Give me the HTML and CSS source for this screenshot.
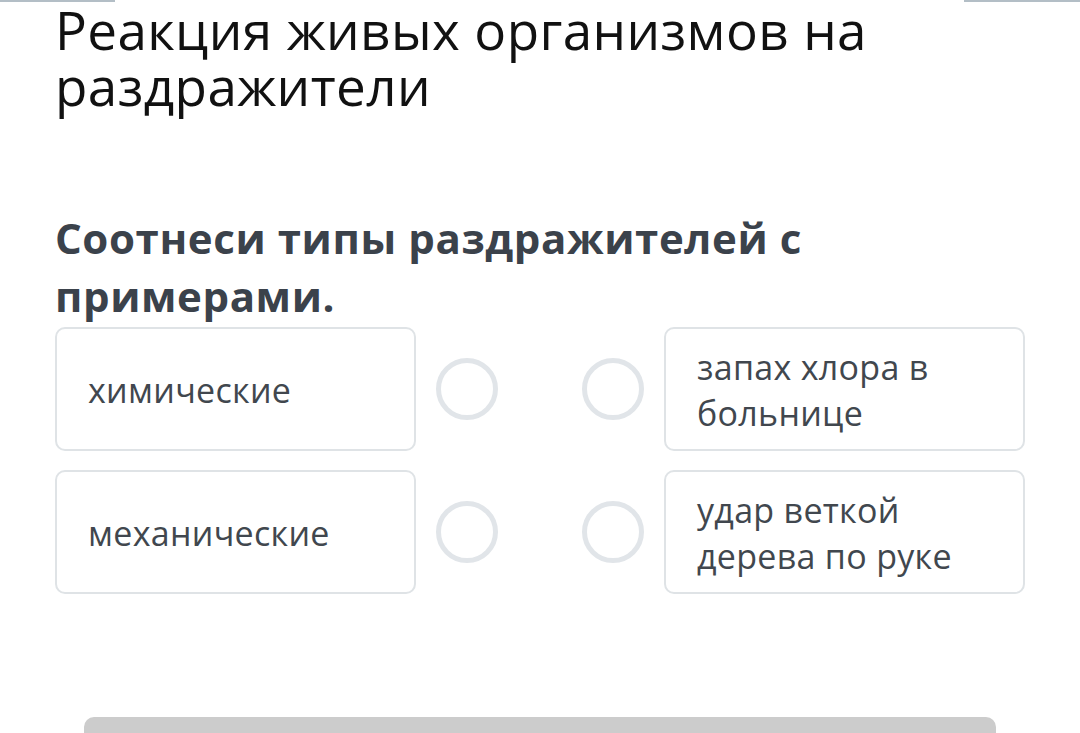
FILE: index.html
```html
<!DOCTYPE html>
<html lang="ru">
<head>
<meta charset="utf-8">
<link rel="stylesheet" href="styles.css">
</head>
<body>
<div class="topline">
  <span class="seg seg-left"></span>
  <span class="seg seg-right"></span>
</div>
<main class="page">
  <h1 class="title">Реакция живых организмов на раздражители</h1>
  <h2 class="question">Соотнеси типы раздражителей с примерами.</h2>
  <div class="match">
    <div class="card"><span>химические</span></div>
    <div class="dot"></div>
    <div class="spacer"></div>
    <div class="dot"></div>
    <div class="card"><span>запах хлора в больнице</span></div>

    <div class="card"><span>механические</span></div>
    <div class="dot"></div>
    <div class="spacer"></div>
    <div class="dot"></div>
    <div class="card"><span>удар веткой дерева по руке</span></div>
  </div>
  <div class="bottom-bar"></div>
</main>
</body>
</html>
```
FILE: styles.css
```css
html, body {
  margin: 0;
  padding: 0;
  background: #ffffff;
}
body {
  width: 1080px;
  height: 733px;
  overflow: hidden;
  font-family: "Open Sans", "Noto Sans", sans-serif;
  position: relative;
}
.topline {
  display: flex;
  justify-content: space-between;
  height: 2px;
}
.seg {
  display: block;
  height: 2px;
  background: #b3bec6;
}
.seg-left { width: 115px; }
.seg-right { width: 116px; }

.page {
  padding: 0 55px 0 55px;
}
.title {
  margin: 0;
  font-size: 53px;
  line-height: 56px;
  font-weight: 400;
  color: #111111;
  letter-spacing: 0.4px;
}
.question {
  margin: 95px 0 0 0;
  font-size: 42px;
  line-height: 58px;
  font-weight: 700;
  color: #3b424b;
  letter-spacing: 0.6px;
}
.match {
  margin-top: 2px;
  display: grid;
  grid-template-columns: 361px 62px 1fr 62px 361px;
  grid-auto-rows: 124px;
  column-gap: 20px;
  row-gap: 19px;
  align-items: center;
}
.card {
  box-sizing: border-box;
  height: 124px;
  border: 2px solid #dfe3e6;
  border-radius: 10px;
  display: flex;
  align-items: center;
  padding: 2px 24px 0 31px;
  font-size: 34px;
  line-height: 46px;
  color: #41474e;
  letter-spacing: 0.3px;
}
.dot {
  box-sizing: border-box;
  width: 62px;
  height: 62px;
  border: 5px solid #e1e5e9;
  border-radius: 50%;
}
.bottom-bar {
  margin: 123px 29px 0 29px;
  height: 30px;
  background: #cccccc;
  border-radius: 10px 10px 0 0;
}
```
